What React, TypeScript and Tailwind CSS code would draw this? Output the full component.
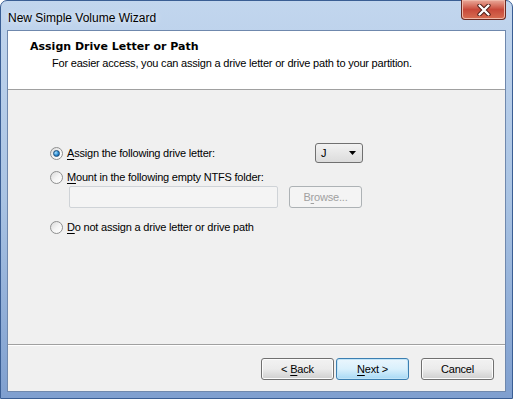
import React from 'react'

const font = { fontFamily: '"Liberation Sans", Arial, sans-serif' }

// Win7 style radio button
const Radio = ({ checked }: { checked?: boolean }) => (
  <span className="relative inline-flex h-[13px] w-[13px] shrink-0 items-center justify-center rounded-full border border-[#8e8f8f] bg-gradient-to-br from-[#d9d9d9] via-[#f4f4f4] to-[#ffffff]">
    {checked && (
      <span className="h-[7px] w-[7px] rounded-full border border-[#1b4d7a] bg-[radial-gradient(circle_at_35%_35%,#a8e1ff,#2a8ad2_55%,#0c4e8c)]" />
    )}
  </span>
)

const Label = ({ ul, rest }: { ul: string; rest: string }) => (
  <span className="text-[11px] leading-none tracking-[-0.2px] text-black">
    <span className="underline underline-offset-2">{ul}</span>
    {rest}
  </span>
)

const WinButton = ({ children, focused, disabled, className }: { children: React.ReactNode; focused?: boolean; disabled?: boolean; className?: string }) => (
  <button
    className={
      'flex h-[22px] items-center justify-center rounded-[3px] border text-[11px] tracking-[-0.2px] ' +
      (disabled
        ? 'border-[#adb2b5] bg-[#f4f4f4] text-[#a0a0a0] '
        : focused
        ? 'border-[#3c7fb1] bg-gradient-to-b from-[#eaf6fd] via-[#d9f0fc] to-[#a7d9f5] text-black shadow-[inset_0_0_0_1px_#c2e5f8] '
        : 'border-[#707070] bg-gradient-to-b from-[#f2f2f2] via-[#ebebeb] to-[#cfcfcf] text-black shadow-[inset_0_0_0_1px_#fcfcfc] ') +
      (className ?? '')
    }
  >
    {children}
  </button>
)

export default function App() {
  return (
    <div className="h-[399px] w-[513px] bg-white" style={font}>
      <div className="flex h-full w-full flex-col rounded-t-[7px] border border-[#3a5e94] bg-gradient-to-b from-[#c2d6ee] via-[#a9c3e3] to-[#7f9fcf] px-[6px] pb-[6px]">
        {/* title bar */}
        <div className="flex h-[29px] shrink-0 items-start justify-between">
          <span className="mt-[8px] pl-[1px] text-[12px] text-black [text-shadow:0_0_6px_#ffffff]">New Simple Volume Wizard</span>
          <div className="-mt-[1px] flex h-[20px] w-[45px] items-center justify-center rounded-b-[4px] border border-t-0 border-[#6b2a22] bg-gradient-to-b from-[#e9a99a] via-[#c8493a] to-[#d76d52] shadow-[inset_0_0_0_1px_#f0b8a8]">
            <svg width="14" height="12" viewBox="0 0 14 12">
              <path d="M2.5 1.5 L11.5 10.5 M11.5 1.5 L2.5 10.5" stroke="#4a1a14" strokeWidth="4.2" strokeLinecap="round" />
              <path d="M2.5 1.5 L11.5 10.5 M11.5 1.5 L2.5 10.5" stroke="#ffffff" strokeWidth="2.4" strokeLinecap="round" />
            </svg>
          </div>
        </div>

        {/* client area */}
        <div className="flex flex-1 flex-col border border-[#6f88ad] bg-[#f0f0f0]">
          <div className="flex h-[59px] shrink-0 flex-col border-b border-[#a0a0a0] bg-white">
            <div className="mt-[10px] pl-[22px] font-['DejaVu_Sans'] text-[11px] font-bold leading-none text-black">Assign Drive Letter or Path</div>
            <div className="mt-[6px] pl-[44px] text-[11px] leading-none tracking-[-0.2px] text-black">
              For easier access, you can assign a drive letter or drive path to your partition.
            </div>
          </div>

          <div className="flex flex-1 flex-col pl-[42px] pt-[53px]">
            <div className="flex h-[20px] items-center">
              <div className="flex w-[265px] items-center gap-[4px]">
                <Radio checked />
                <Label ul="A" rest="ssign the following drive letter:" />
              </div>
              <div className="flex h-[20px] w-[48px] items-center justify-between rounded-[3px] border border-[#707070] bg-gradient-to-b from-[#f2f2f2] to-[#dcdcdc] pl-[5px] pr-[6px] text-[11px]">
                <span>J</span>
                <svg width="7" height="4" viewBox="0 0 7 4">
                  <path d="M0 0 L7 0 L3.5 4 Z" fill="#000" />
                </svg>
              </div>
            </div>
            <div className="mt-[7px] flex h-[14px] items-center gap-[4px]">
              <Radio />
              <Label ul="M" rest="ount in the following empty NTFS folder:" />
            </div>
            <div className="mt-[2px] flex h-[22px] items-center pl-[19px]">
              <div className="h-[22px] w-[209px] rounded-[2px] border border-[#cfd3d7] bg-[#f4f4f4]" />
              <WinButton disabled className="ml-[11px] w-[73px]">
                <span>
                  B<span className="underline underline-offset-2">r</span>owse...
                </span>
              </WinButton>
            </div>
            <div className="mt-[12px] flex h-[14px] items-center gap-[4px]">
              <Radio />
              <Label ul="D" rest="o not assign a drive letter or drive path" />
            </div>
          </div>

          <div className="flex h-[47px] shrink-0 items-start border-t border-[#a0a0a0] pl-[253px] pt-[13px] shadow-[inset_0_1px_0_#ffffff]">
            <WinButton className="w-[73px]">
              <span>
                &lt; <span className="underline underline-offset-2">B</span>ack
              </span>
            </WinButton>
            <WinButton focused className="ml-[2px] w-[73px]">
              <span>
                <span className="underline underline-offset-2">N</span>ext &gt;
              </span>
            </WinButton>
            <WinButton className="ml-[12px] w-[73px]">Cancel</WinButton>
          </div>
        </div>
      </div>
    </div>
  )
}
